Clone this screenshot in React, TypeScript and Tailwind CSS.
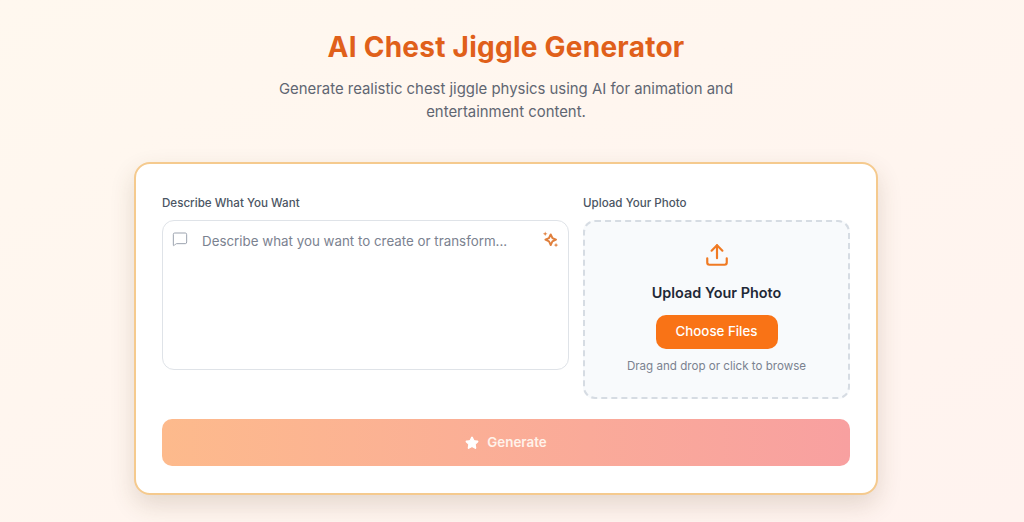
import { MessageSquare, Upload, Star } from 'lucide-react'

export default function App() {
  return (
    <div className="h-[522px] overflow-hidden bg-gradient-to-br from-[#fff8ef] to-[#fff3ef] pr-[12px] font-['Inter',sans-serif]">
      <header className="pt-[28px] text-center">
        <h1 className="text-[28px] leading-[38px] font-bold tracking-[0.25px] text-[#e0601a]">AI Chest Jiggle Generator</h1>
        <p className="mx-auto mt-[12px] w-[480px] text-[14.9px] leading-[23px] text-[#5f6672]">
          Generate realistic chest jiggle physics using AI for animation and entertainment content.
        </p>
      </header>

      <main className="mx-auto mt-[38px] w-[744px] rounded-2xl border-2 border-[#f5ca8e] bg-white px-[26px] pt-[30px] pb-[27px] shadow-[0_10px_25px_rgba(90,60,30,0.16)]">
        <div className="grid grid-cols-[407px_267px] gap-x-[14px]">
          <div>
            <label className="block text-[11.6px] leading-[18px] font-medium text-[#4b5563]">Describe What You Want</label>
            <div className="relative mt-[8px] h-[150px] rounded-xl border border-[#dfe3e8] bg-white">
              <MessageSquare className="absolute top-[10px] left-[9px] h-[16px] w-[16px] text-[#9ca3af]" strokeWidth={1.5} />
              <p className="pt-[11px] pl-[39px] text-[13.35px] leading-[18px] text-[#7b8290]">Describe what you want to create or transform...</p>
              <svg className="absolute top-[10px] right-[9px] h-[17px] w-[17px]" viewBox="0 0 16 16" fill="none">
                <path d="M8.2 3.2 L9.8 6.6 L13.2 8.2 L9.8 9.8 L8.2 13.2 L6.6 9.8 L3.2 8.2 L6.6 6.6 Z" stroke="#e07f3c" strokeWidth="1.8" strokeLinejoin="round" />
                <path d="M3 0.4 L3.6 2 L5.2 2.6 L3.6 3.2 L3 4.8 L2.4 3.2 L0.8 2.6 L2.4 2 Z" fill="#e07f3c" />
                <path d="M13.2 11 L13.8 12.6 L15.4 13.2 L13.8 13.8 L13.2 15.4 L12.6 13.8 L11 13.2 L12.6 12.6 Z" fill="#e07f3c" />
              </svg>
            </div>
          </div>
          <div>
            <label className="block text-[11.6px] leading-[18px] font-medium text-[#4b5563]">Upload Your Photo</label>
            <div className="mt-[8px] flex h-[179px] flex-col items-center rounded-xl border-2 border-dashed border-[#d6dce3] bg-[#f8fafc] pt-[20px]">
              <Upload className="h-[26px] w-[26px] text-[#f07a23]" strokeWidth={2} />
              <h3 className="mt-[15px] text-[14.4px] leading-[20px] font-semibold text-[#1f2937]">Upload Your Photo</h3>
              <button className="mt-[12px] h-[34px] w-[122px] rounded-[10px] bg-[#f97316] text-[13.3px] font-medium text-white">Choose Files</button>
              <p className="mt-[8px] text-[11.6px] leading-[18px] text-[#7b8290]">Drag and drop or click to browse</p>
            </div>
          </div>
        </div>
        <button className="mt-[20px] flex h-[47px] w-full items-center justify-center gap-[8px] rounded-[10px] bg-gradient-to-r from-[#fdba8c] to-[#f8a0a0] text-[13.4px] font-semibold text-[#fff2ea]">
          <Star className="h-[14px] w-[14px] fill-white text-white" />
          Generate
        </button>
      </main>
    </div>
  )
}
